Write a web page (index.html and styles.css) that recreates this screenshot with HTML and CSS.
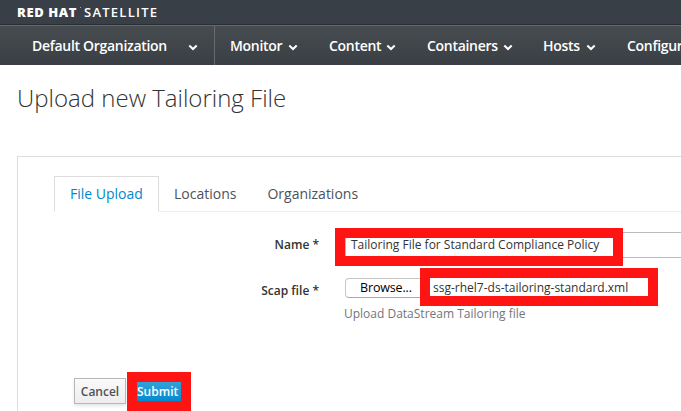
FILE: index.html
```html
<!DOCTYPE html>
<html lang="en">
<head>
<meta charset="utf-8">
<title>Upload new Tailoring File</title>
<link rel="stylesheet" href="styles.css">
</head>
<body>
<header class="brand"><span class="brand-name"><b>RED HAT</b><i class="mark"></i><span class="product">SATELLITE</span></span></header>
<nav class="navbar">
  <a class="org">Default Organization <svg class="chevron" viewBox="0 0 10 7"><path d="M1.3 1.5 5 5 8.7 1.5"/></svg></a>
  <a class="item monitor">Monitor <svg class="chevron" viewBox="0 0 10 7"><path d="M1.3 1.5 5 5 8.7 1.5"/></svg></a>
  <a class="item content">Content <svg class="chevron" viewBox="0 0 10 7"><path d="M1.3 1.5 5 5 8.7 1.5"/></svg></a>
  <a class="item containers">Containers <svg class="chevron" viewBox="0 0 10 7"><path d="M1.3 1.5 5 5 8.7 1.5"/></svg></a>
  <a class="item hosts">Hosts <svg class="chevron" viewBox="0 0 10 7"><path d="M1.3 1.5 5 5 8.7 1.5"/></svg></a>
  <a class="item">Configure</a>
</nav>
<h1 class="title">Upload new Tailoring File</h1>
<main class="panel">
  <div class="tabs">
    <a class="tab active">File Upload</a>
    <a class="tab locations">Locations</a>
    <a class="tab organizations">Organizations</a>
  </div>
  <div class="row name-row">
    <label class="label">Name *</label>
    <div class="field text-input"><span class="value">Tailoring File for Standard Compliance Policy</span><span class="highlight highlight-name"></span></div>
  </div>
  <div class="row file-row">
    <label class="label">Scap file *</label>
    <div class="field file-input"><span class="browse">Browse...</span><span class="filename">ssg-rhel7-ds-tailoring-standard.xml</span><span class="highlight highlight-file"></span></div>
  </div>
  <p class="help">Upload DataStream Tailoring file</p>
  <div class="actions">
    <a class="button">Cancel</a>
    <a class="button primary">Submit<span class="highlight highlight-submit"></span></a>
  </div>
</main>
</body>
</html>
```
FILE: styles.css
```css
* { box-sizing: border-box; }
body {
  margin: 0;
  width: 681px;
  height: 411px;
  overflow: hidden;
  background: #fff;
  color: #333;
  font-family: "Open Sans", sans-serif;
  font-size: 12px;
}
.brand {
  height: 25px;
  padding-left: 17px;
  background: #393f47;
  border-bottom: 1px solid #2b2f34;
  color: #fff;
}
.brand-name {
  display: flex;
  font: 13px/25px "Open Sans", sans-serif;
}
.brand-name b { width: 63px; font-weight: 800; letter-spacing: 0.6px; white-space: nowrap; }
.mark { width: 1px; height: 1px; margin: 7px 3px 0 0; background: #aaa; }
.product { font-weight: 600; letter-spacing: 1.25px; }
.navbar {
  display: flex;
  height: 40px;
  border-top: 1px solid #64686b;
  background: linear-gradient(#474c50, #393f44);
  color: #fff;
  font-size: 14px;
  font-weight: 600;
  line-height: 40px;
  letter-spacing: -0.3px;
  white-space: nowrap;
}
.navbar a { display: flex; align-items: center; justify-content: space-between; flex: none; }
.chevron { width: 10px; height: 7px; margin-top: 3px; fill: none; stroke: #fff; stroke-width: 2; }
.org { width: 215px; padding: 0 16px 0 32px; border-right: 1px solid #676b6e; }
.item { margin-left: 31px; }
.monitor { width: 68px; margin-left: 15px; }
.content { width: 67px; }
.containers { width: 86px; }
.hosts { width: 53px; margin-left: 30px; }
.title {
  margin: 15px 0 0 17px;
  font-size: 24px;
  font-weight: 300;
  line-height: 36px;
  white-space: nowrap;
}
.panel {
  height: 270px;
  margin: 40px 0 0 17px;
  padding: 19px 0 0 36px;
  border: solid #ddd;
  border-width: 1px 0 0 1px;
}
.tabs {
  display: flex;
  height: 36px;
  border-bottom: 1px solid #ececec;
  font-size: 14px;
  line-height: 35px;
  color: #4d5258;
}
.tab { margin-left: 15px; }
.organizations { margin-left: 31px; }
.active {
  width: 105px;
  height: 36px;
  margin-left: 0;
  padding-left: 15px;
  border: 1px solid #ddd;
  border-bottom-color: #fff;
  background: #fff;
  color: #0088ce;
  line-height: 33px;
}
.row { display: flex; }
.label { flex: none; width: 265px; text-align: right; font-weight: 600; line-height: 26px; }
.field { position: relative; flex: none; margin-left: 26px; white-space: nowrap; }
.name-row { margin-top: 20px; }
.text-input {
  width: 360px;
  height: 26px;
  padding-left: 5px;
  border: 1px solid #bbb;
  line-height: 24px;
}
.file-row { height: 26px; margin-top: 19px; }
.file-row .label { line-height: 28px; }
.file-input { display: flex; }
.browse {
  width: 82px;
  height: 20px;
  padding-left: 14px;
  margin-top: 1px;
  border: 1px solid #c6c6c6;
  border-bottom-color: #aaa;
  border-radius: 4px;
  color: #000;
  font-size: 12.5px;
  letter-spacing: -0.15px;
  line-height: 18px;
}
.filename { margin-left: 6px; line-height: 22px; }
.help { margin: 1px 0 0 290px; color: #72767b; line-height: 20px; }
.highlight { position: absolute; border: 10px solid #ff1414; }
.highlight-name { left: -11px; top: -5px; width: 288px; height: 38px; }
.highlight-file { left: 75px; top: -9px; width: 238px; height: 38px; }
.actions { display: flex; margin: 54px 0 0 20px; gap: 10px; }
.button {
  width: 52px;
  height: 26px;
  border: 1px solid #b7b7b7;
  background: linear-gradient(#fafafa, #ededed);
  box-shadow: 0 2px 3px rgba(0, 0, 0, .1);
  color: #4d5258;
  font-weight: 600;
  line-height: 25px;
  text-align: center;
}
.primary {
  position: relative;
  border-color: #0088ce;
  background: linear-gradient(#39a5dc, #0088ce);
  color: #fff;
  text-align: left;
}
.highlight-submit { left: -10px; top: -7px; width: 64px; height: 39px; }
```
